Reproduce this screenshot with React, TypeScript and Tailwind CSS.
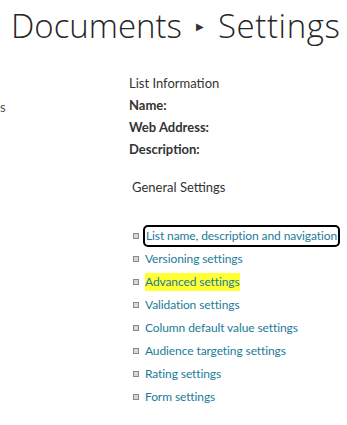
const links = [
  "List name, description and navigation",
  "Versioning settings",
  "Advanced settings",
  "Validation settings",
  "Column default value settings",
  "Audience targeting settings",
  "Rating settings",
  "Form settings",
];

function Bullet() {
  return <span className="inline-block w-[6px] h-[6px] border border-[#8a8a8a] bg-[#d8d8d8] shrink-0" />;
}

export default function App() {
  return (
    <div className="w-[347px] h-[425px] bg-white overflow-hidden text-[#333] font-['Lato',sans-serif]">
      <div className="flex items-center pl-[11px] h-[52px] text-[33px] font-light text-[#262626] whitespace-nowrap font-['Open_Sans',sans-serif]">
        <span>Documents</span>
        <span className="ml-[14px] mr-[14px] text-[10px] text-[#333]">▶</span>
        <span className="tracking-[0.6px]">Settings</span>
      </div>
      <div className="flex">
        <div className="w-[129px] shrink-0 pt-[46px] text-[13px] text-[#555]">s</div>
        <div className="pt-[20px] text-[13px] whitespace-nowrap">
          <div className="h-[22px] leading-[22px] text-[#333]">List Information</div>
          <div className="font-bold text-[#333] leading-[22px]">Name:</div>
          <div className="font-bold text-[#333] leading-[22px]">Web Address:</div>
          <div className="font-bold text-[#333] leading-[22px]">Description:</div>
          <div className="mt-[16px] pl-[3px] leading-[22px] text-[#333]">General Settings</div>
          <ul className="mt-[26px] pl-[4px] flex flex-col text-[12px] tracking-[-0.1px]">
            {links.map((l, i) => (
              <li key={l} className="flex items-center gap-[6px] h-[23px]">
                <Bullet />
                <span
                  className={
                    "leading-[18px] text-[#1b7b99] " +
                    (i === 0 ? "outline-2 outline-black rounded-[3px] px-[1px]" : "") +
                    (i === 2 ? "bg-[#ffff33]" : "")
                  }
                >
                  {l}
                </span>
              </li>
            ))}
          </ul>
        </div>
      </div>
    </div>
  );
}
